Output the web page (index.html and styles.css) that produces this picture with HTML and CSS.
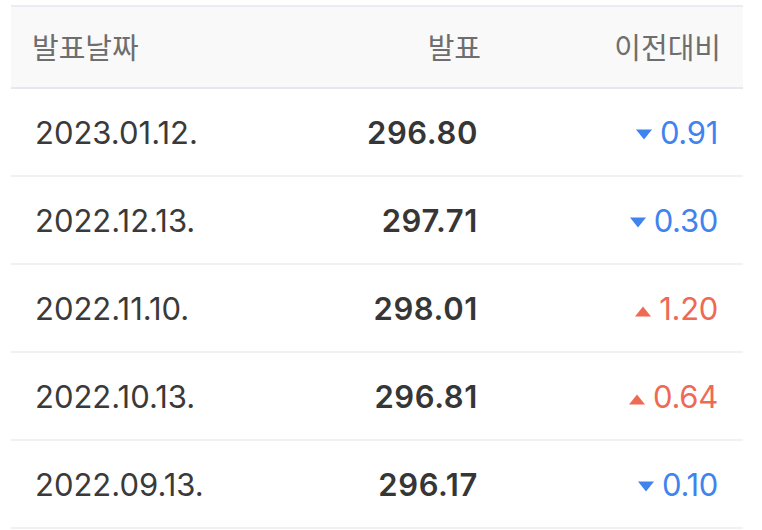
FILE: index.html
```html
<!DOCTYPE html>
<html lang="ko">
<head>
<meta charset="utf-8">
<link rel="stylesheet" href="styles.css">
</head>
<body>
<div class="wrap">
  <table class="tbl">
    <colgroup>
      <col class="c1"><col class="c2"><col class="c3">
    </colgroup>
    <thead>
      <tr><th class="left">발표날짜</th><th class="right">발표</th><th class="right">이전대비</th></tr>
    </thead>
    <tbody>
      <tr><td class="date">2023.01.12.</td><td class="val">296.80</td><td class="chg down"><svg class="tri" width="16" height="11" viewBox="0 0 16 11"><path d="M0 0.5H16L8 10.5Z"/></svg>0.91</td></tr>
      <tr><td class="date">2022.12.13.</td><td class="val">297.71</td><td class="chg down"><svg class="tri" width="16" height="11" viewBox="0 0 16 11"><path d="M0 0.5H16L8 10.5Z"/></svg>0.30</td></tr>
      <tr><td class="date">2022.11.10.</td><td class="val">298.01</td><td class="chg up"><svg class="tri" width="16" height="11" viewBox="0 0 16 11"><path d="M8 0.5L16 10.5H0Z"/></svg>1.20</td></tr>
      <tr><td class="date">2022.10.13.</td><td class="val">296.81</td><td class="chg up"><svg class="tri" width="16" height="11" viewBox="0 0 16 11"><path d="M8 0.5L16 10.5H0Z"/></svg>0.64</td></tr>
      <tr><td class="date">2022.09.13.</td><td class="val">296.17</td><td class="chg down"><svg class="tri" width="16" height="11" viewBox="0 0 16 11"><path d="M0 0.5H16L8 10.5Z"/></svg>0.10</td></tr>
    </tbody>
  </table>
</div>
</body>
</html>
```
FILE: styles.css
```css
html, body {
  margin: 0;
  background: #ffffff;
}
body {
  font-family: Inter, "Noto Sans CJK KR", sans-serif;
}
.wrap {
  padding: 5px 19px 0 11px;
}
.tbl {
  width: 100%;
  border-collapse: collapse;
  table-layout: fixed;
}
.c2 { width: 242px; }
.c3 { width: 240px; }
.tbl th {
  background: #f9f9f9;
  border-top: 2px solid #e9edf1;
  border-bottom: 2px solid #e5e9ee;
  height: 77px;
  padding: 0 22px 3px 21px;
  font-family: "Noto Sans CJK KR", sans-serif;
  font-weight: 400;
  font-size: 29px;
  color: #6e6e6e;
}
.tbl th.left { text-align: left; }
.tbl th.right { text-align: right; }
.tbl td {
  height: 86px;
  padding: 0 25px 0 24px;
  border-bottom: 2px solid #f1f1f1;
  font-size: 31px;
  color: #3a3a3a;
  white-space: nowrap;
}
.tbl td.date {
  text-align: left;
}
.tbl td.val {
  text-align: right;
  font-weight: 600;
  color: #363636;
  letter-spacing: 0.6px;
  padding-right: 25px;
}
.tbl td.chg {
  text-align: right;
  letter-spacing: -0.3px;
}
.tri {
  margin-right: 8px;
  vertical-align: 4px;
}
.tbl td.down { color: #3f84ee; }
.down .tri { fill: #3f84ee; }
.tbl td.up { color: #ee6a55; }
.up .tri { fill: #ee6a55; vertical-align: 3px; }
```
